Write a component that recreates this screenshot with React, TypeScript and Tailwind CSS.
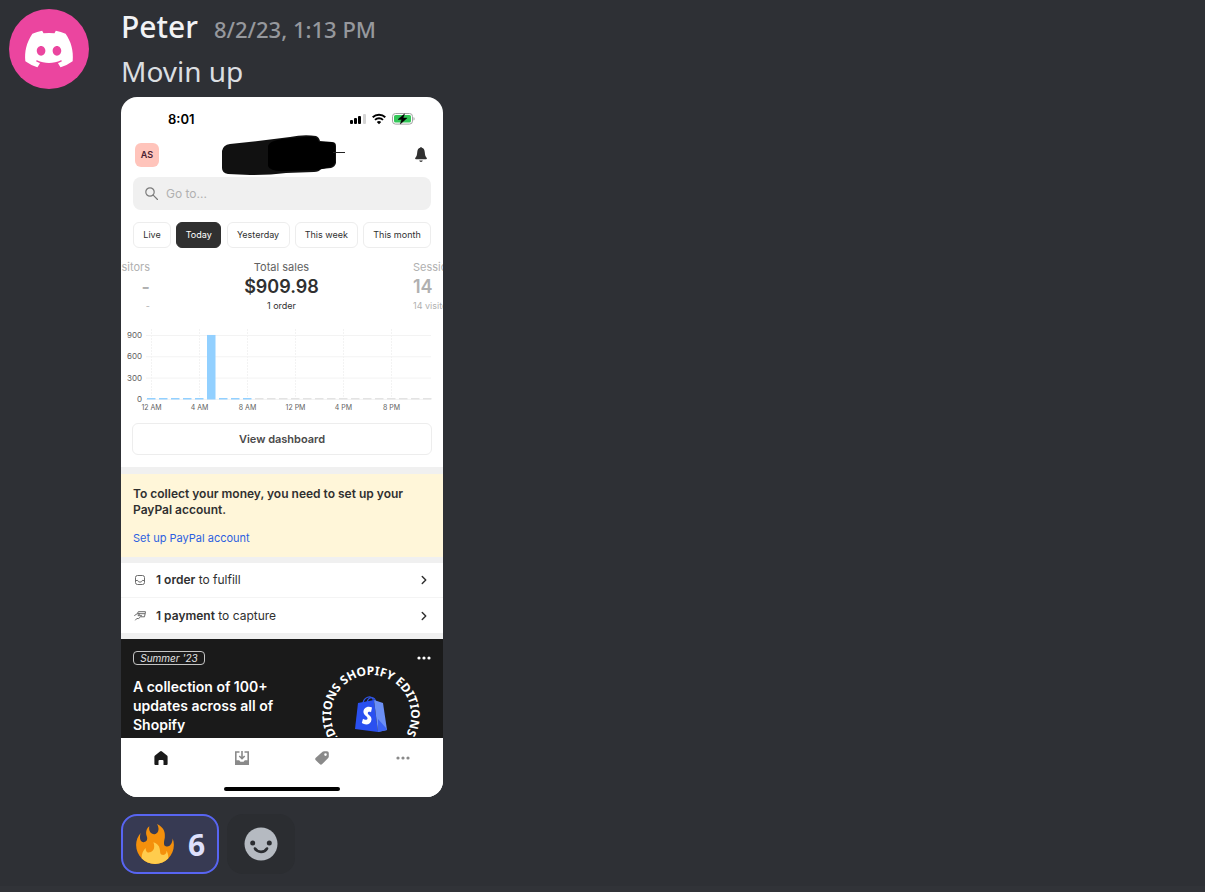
import { FaDiscord } from "react-icons/fa";
import { ChevronRight } from "lucide-react";

const ranges = [
  { label: "Live", width: "w-[38px]" },
  { label: "Today", width: "w-[45px]", active: true },
  { label: "Yesterday", width: "w-[63px]" },
  { label: "This week", width: "w-[63px]" },
  { label: "This month", width: "w-[68px]" },
];

const hourlySales = [0, 0, 0, 0, 0, 910, 0, 0, 0];
const yTicks = [900, 600, 300, 0];
const xTicks = ["12 AM", "4 AM", "8 AM", "12 PM", "4 PM", "8 PM"];

const Avatar = () => (
  <div className="w-20 h-20 shrink-0 rounded-full bg-[#eb459f] text-white flex items-center justify-center">
    <FaDiscord className="w-[52px] h-[52px]" />
  </div>
);

const StatusBar = () => (
  <div className="flex items-center justify-between pl-[47px] pr-7 pt-3">
    <div className="text-[13px] leading-5 font-semibold text-black">8:01</div>
    <div className="flex items-center gap-[6px]">
      <svg className="w-4 h-3" viewBox="0 0 16 12">
        <rect x="0" y="7" width="3" height="4" rx="1" />
        <rect x="4" y="5" width="3" height="6" rx="1" />
        <rect x="8" y="3" width="3" height="8" rx="1" />
        <rect x="13" y="1" width="3" height="10" rx="1" fill="#d4d4d4" />
      </svg>
      <svg className="w-[14px] h-3" viewBox="0 0 14 12">
        <g fill="none" stroke="#000" strokeWidth="1.9">
          <path d="M.7 4.3a9 9 0 0 1 12.6 0" />
          <path d="M3 6.9a5.7 5.7 0 0 1 8 0" />
        </g>
        <path d="M7 11.2 4.8 9a3.1 3.1 0 0 1 4.4 0z" />
      </svg>
      <svg className="w-[23px] h-3" viewBox="0 0 23 12">
        <rect x=".5" y=".5" width="20" height="10.6" rx="3" fill="#fff" stroke="#a3a3a3" />
        <rect x="2" y="2" width="17" height="7.6" rx="1.6" fill="#34c759" />
        <path d="M21.5 4v3.6c1.5-.5 1.5-3 0-3.6z" fill="#a3a3a3" />
        <path d="M12.6.8 6 6.5h3.6L8.3 11l6.8-6h-3.9z" stroke="#000" strokeWidth=".4" />
      </svg>
    </div>
  </div>
);

const StoreHeader = () => (
  <div className="flex items-center justify-between pl-[14px] pr-4 pt-[3px] h-12">
    <div className="w-6 h-6 rounded-md bg-[#ffc4bb] text-[#4a1f33] text-[9px] font-semibold flex items-center justify-center">
      AS
    </div>
    <svg className="w-[126px] h-[42px] -ml-2" viewBox="0 0 126 42">
      <path
        d="M2 17Q3 11 10 10L38 7 70 3Q84 0 96 2 99 3 100 7L112 8Q116 8 116 12V29Q115 33 111 34L101 35Q99 38 94 38L66 39Q50 41 30 41L8 40Q2 39 2 34Z"
        fill="#111"
      />
      <path
        d="M48 12Q49 7 62 5L84 3Q96 1 98 6L99 8 111 8Q115 9 115 12V28Q114 32 110 33L98 36 66 37Q50 38 48 32Z"
        fill="#000"
      />
      <path d="M113 18.5h12" stroke="#222" />
    </svg>
    <button aria-label="Notifications">
      <svg className="w-3 h-4" viewBox="0 0 12 16" fill="#303030">
        <path d="M5.2.8c0-1 1.6-1 1.6 0C8.8 1.2 9.6 3 9.8 5.5c.2 2.800.7 4 1.800 5.300.6.8.3 1.500-.6 1.500H1c-.9 0-1.200-.7-.6-1.500C1.500 9.500 2 8.300 2.200 5.500 2.400 3 3.200 1.200 5.200.8z" />
        <path d="M4.200 13.600h3.600c-.3 1.800-3.300 1.800-3.600 0z" />
      </svg>
    </button>
  </div>
);

const SearchBox = () => (
  <label className="mx-3 h-[33px] rounded-lg bg-[#f0f0f0] flex items-center gap-2 px-3">
    <svg className="w-[13px] h-[13px] shrink-0" viewBox="0 0 13 13" fill="none" stroke="#7a7a7a" strokeWidth="1.200">
      <circle cx="5" cy="5" r="4.200" />
      <path d="m8.200 8.200 4.300 4.300" strokeLinecap="round" />
    </svg>
    <input
      type="text"
      aria-label="Search"
      placeholder="Go to..."
      className="w-full bg-transparent text-[12px] placeholder:text-[#b0b0b0] outline-none"
    />
  </label>
);

const Metrics = () => (
  <div className="flex justify-between mt-[11px] text-[11px]">
    <div className="w-[29px] flex flex-col items-end text-[#b0b0b0]">
      <div className="leading-4">Visitors</div>
      <div className="text-lg leading-6 font-semibold">-</div>
      <div className="text-[9px] leading-[14px]">-</div>
    </div>
    <div className="flex flex-col items-center text-[#303030]">
      <div className="leading-4 text-[#616161]">Total sales</div>
      <div className="text-lg leading-6 font-semibold">$909.98</div>
      <div className="text-[9px] leading-[14px]">1 order</div>
    </div>
    <div className="w-[30px] whitespace-nowrap text-[#b0b0b0]">
      <div className="leading-4">Sessions</div>
      <div className="text-lg leading-6 font-semibold">14</div>
      <div className="text-[9px] leading-[14px]">14 visitors</div>
    </div>
  </div>
);

const SalesChart = () => (
  <svg className="w-full mt-[10px]" viewBox="0 0 322 90" role="img" aria-label="Sales by hour">
    {yTicks.map((tick, i) => (
      <g key={tick}>
        <path d={`M25 ${12.5 + i * 21.3}H310`} stroke="#f3f3f3" />
        <text x="21" y={15 + i * 21.3} fontSize="8" textAnchor="end" fill="#616161">
          {tick}
        </text>
      </g>
    ))}
    {xTicks.map((tick, i) => (
      <g key={tick}>
        <path d={`M${30.5 + i * 48} 6V76`} stroke="#f3f3f3" strokeDasharray="2 1" />
        <text x={30.5 + i * 48} y="87" fontSize="7" textAnchor="middle" fill="#616161">
          {tick}
        </text>
      </g>
    ))}
    {Array.from({ length: 24 }, (_, hour) => {
      const height = Math.max((hourlySales[hour] ?? 0) / 14.1, 1.5);
      return (
        <rect
          key={hour}
          x={26 + hour * 12}
          y={76.5 - height}
          width="8.500"
          height={height}
          fill={hour < hourlySales.length ? "#92d0ff" : "#e3e3e3"}
        />
      );
    })}
  </svg>
);

const InboxIcon = () => (
  <svg className="w-3 h-3" viewBox="0 0 12 12" fill="none" stroke="#6b6b6b">
    <rect x="1.500" y="1.500" width="9" height="9" rx="2" />
    <path d="M1.500 6.500h2.200c.4 0 .6 1.500 1.300 1.500h2c.7 0 .9-1.500 1.300-1.500h2.200" />
  </svg>
);

const PaymentIcon = () => (
  <svg className="w-3 h-3" viewBox="0 0 12 12" fill="none" stroke="#6b6b6b" strokeLinejoin="round">
    <path d="M3.500 3.500 4.300 1.700h7.200L10.500 6.800H7M3.900 3.700h7.300" />
    <path d="M.3 5.700 3 3.800h2.700L4 5.700h3.700L4.700 8.500H2.800L1.300 10.300" />
  </svg>
);

interface TaskRowProps {
  icon: React.ReactNode;
  count: string;
  action: string;
}

const TaskRow = ({ icon, count, action }: TaskRowProps) => (
  <button className="w-full h-[35px] flex items-center pl-[13px] pr-3 text-[12px] text-[#303030]">
    {icon}
    <span className="ml-[10px]">
      <span className="font-semibold">{count}</span> {action}
    </span>
    <ChevronRight className="ml-auto w-[14px] h-[14px] text-[#303030]" strokeWidth={2.5} />
  </button>
);

const EditionsBadge = () => (
  <svg className="w-[100px] h-[77px]" viewBox="0 0 100 77" aria-label="Shopify Editions">
    <path id="ring" d="M50 95a40 40 0 0 1 0-80a40 40 0 0 1 0 80" fill="none" />
    <text className="font-['Noto_Sans']" fontSize="12" fontWeight="700" fill="#fff">
      <textPath href="#ring" startOffset="14%">
        EDITIONS SHOPIFY EDITIONS
      </textPath>
    </text>
    <g fill="none" stroke="#2f55e8" strokeWidth="1.200">
      <path d="M42 43c1-6 8-8 10-4l1 4" />
      <path d="M46 42c2-6 8-6 9 1" />
    </g>
    <path d="M37 43 53 40 57 72 34 69Z" fill="#2a50f0" />
    <path d="M53 40 62 43 66 70 57 72Z" fill="#6b8ff5" />
    <path d="m57 59 8 9 1 2-9 2z" fill="#3c63f2" />
    <path
      d="M51 47.500c-5-2-9 1-8.500 5 .5 3 4.500 4 4 6.300-.5 1.800-3 1-4.500 0l-1.200 4.200c4 2.800 9.300 1.500 9.700-3.500.3-4-4-4.500-3.700-6.500.3-1.500 2.200-1.200 3.200-.8z"
      fill="#fff"
    />
  </svg>
);

const Dots = () => (
  <svg className="w-[14px] h-1" viewBox="0 0 14 4" fill="currentColor">
    <circle cx="2" cy="2" r="1.600" />
    <circle cx="7" cy="2" r="1.600" />
    <circle cx="12" cy="2" r="1.600" />
  </svg>
);

const EditionsCard = () => (
  <div className="h-[99px] overflow-hidden bg-[#1a1a1a] text-white flex justify-between px-3">
    <div className="pt-3">
      <div className="w-[72px] h-[14px] rounded border border-[#c4c4c4] text-[10px] leading-3 italic text-center text-[#e3e3e3]">
        Summer '23
      </div>
      <div className="mt-3 w-[152px] text-[14px] leading-[19px] font-semibold">
        A collection of 100+ updates across all of Shopify
      </div>
    </div>
    <div className="flex flex-col items-end pt-[17px]">
      <button aria-label="More about editions" className="h-1 flex">
        <Dots />
      </button>
      <div className="mr-[10px]">
        <EditionsBadge />
      </div>
    </div>
  </div>
);

const TabBar = () => (
  <div className="bg-white">
    <nav className="h-10 grid grid-cols-4 items-center justify-items-center text-[#8a8a8a]">
      <button aria-label="Home">
        <svg className="w-[14px] h-[14px]" viewBox="0 0 14 14" fill="#1a1a1a">
          <path d="M6 .4q1-.7 2 0l5 4q.6.5.6 1.300V13q0 1-1 1H9.500V10Q9.500 9 8.500 9h-3Q4.500 9 4.500 10v4H1.400q-1 0-1-1V5.700q0-.8.6-1.300z" />
        </svg>
      </button>
      <button aria-label="Orders">
        <svg className="w-[14px] h-[14px]" viewBox="0 0 14 14" fill="none" stroke="currentColor" strokeWidth="1.600">
          <path d="M4.500 1H.8v12.200h12.400V1H9.500M7 0v7.500M4.300 5 7 7.700 9.700 5" />
          <path d="M.8 10h3l1.200 1.500h4l1.200-1.500h3v3.200H.8z" fill="currentColor" />
        </svg>
      </button>
      <button aria-label="Products">
        <svg className="w-[14px] h-[14px]" viewBox="0 0 14 14" fill="currentColor">
          <path
            fillRule="evenodd"
            d="M7.500.8Q8.200.2 9 .2h3q1.800 0 1.800 1.800v3.500q0 .8-.6 1.400l-6 6.200q-1.200 1.200-2.500 0L.8 9.200q-1.200-1.300 0-2.500zM10.500 2.300a1.300 1.300 0 1 0 0 2.600 1.300 1.300 0 0 0 0-2.600z"
          />
        </svg>
      </button>
      <button aria-label="More">
        <Dots />
      </button>
    </nav>
    <div className="h-[19px] flex justify-center pt-[9px]">
      <div className="w-[116px] h-1 rounded-full bg-black" />
    </div>
  </div>
);

const Screenshot = () => (
  <div className="mt-1 w-[322px] max-w-full rounded-2xl overflow-hidden bg-white font-['Inter',sans-serif]">
    <StatusBar />
    <StoreHeader />
    <SearchBox />
    <div className="flex justify-between mx-3 mt-3">
      {ranges.map((range) => (
        <button
          key={range.label}
          className={`h-[26px] rounded-md border text-[9px] ${range.width} ${
            range.active
              ? "bg-[#303030] border-[#303030] text-white"
              : "border-[#ededed] text-[#303030]"
          }`}
        >
          {range.label}
        </button>
      ))}
    </div>
    <Metrics />
    <SalesChart />
    <div className="px-[11px] pt-[10px] pb-3">
      <button className="w-full h-8 rounded-md border border-[#ededed] text-[11px] font-semibold text-[#4a4a4a]">
        View dashboard
      </button>
    </div>
    <div className="border-t-[7px] border-b-[6px] border-[#f0f0f0] bg-[#fff6d9] px-3 pt-3 pb-[11px]">
      <div className="text-[12px] leading-4 font-semibold text-[#303030]">
        To collect your money, you need to set up your PayPal account.
      </div>
      <a href="#paypal" className="block mt-3 text-[11px] leading-4 text-[#2c5fe0]">
        Set up PayPal account
      </a>
    </div>
    <div className="border-b-[6px] border-[#f0f0f0] divide-y divide-[#f4f4f4]">
      <TaskRow icon={<InboxIcon />} count="1 order" action="to fulfill" />
      <TaskRow icon={<PaymentIcon />} count="1 payment" action="to capture" />
    </div>
    <EditionsCard />
    <TabBar />
  </div>
);

const Reactions = () => (
  <div className="flex gap-2 mt-[17px]">
    <button className="h-[60px] px-3 rounded-2xl border-2 border-[#5865f2] bg-[#373a53] flex items-center gap-[13px]">
      <svg className="w-10 h-10" viewBox="0 0 36 36">
        <path
          fill="#F4900C"
          d="M35 19c0-2.062-.367-4.039-1.04-5.868-.46 5.389-3.333 8.157-6.335 6.868-2.812-1.208-.917-5.917-.777-8.164.236-3.809-.012-8.169-6.931-11.794 2.875 5.5.333 8.917-2.333 9.125-2.958.231-5.667-2.542-4.667-7.042-3.238 2.386-3.332 6.402-2.333 9 1.042 2.708-.042 4.958-2.583 5.208-2.84.28-4.418-3.041-2.963-8.333C2.52 10.965 1 14.805 1 19c0 9.389 7.611 17 17 17s17-7.611 17-17z"
        />
        <path
          fill="#FFCC4D"
          d="M28.394 23.999c.148 3.084-2.561 4.293-4.019 3.709-2.106-.843-1.541-2.291-2.083-5.291s-2.625-5.083-5.708-6c2.25 6.333-1.247 8.667-3.08 9.084-1.872.426-3.753-.001-3.968-4.007C7.352 23.668 6 26.676 6 30c0 .368.023.73.055 1.09C9.125 34.124 13.342 36 18 36s8.875-1.876 11.945-4.91c.032-.36.055-.722.055-1.09 0-2.187-.584-4.236-1.606-6.001z"
        />
      </svg>
      <span className="text-[30px] font-bold text-[#dee0fc]">6</span>
    </button>
    <button
      aria-label="Add reaction"
      className="w-[68px] h-[60px] rounded-2xl bg-[#2b2d31] flex items-center justify-center"
    >
      <svg className="w-[34px] h-[34px]" viewBox="0 0 34 34">
        <circle cx="17" cy="17" r="16.500" fill="#b5bac1" />
        <g fill="#2b2d31">
          <circle cx="8.700" cy="16" r="2.500" />
          <circle cx="25.300" cy="16" r="2.500" />
        </g>
        <path d="M11 21.500c2.500 4.500 9.500 4.500 12 0" fill="none" stroke="#2b2d31" strokeWidth="2.600" strokeLinecap="round" />
      </svg>
    </button>
  </div>
);

const App = () => {
  return (
    <div className="min-h-screen bg-[#313338] font-['Noto_Sans',sans-serif]">
      <div className="flex gap-8 pl-[9px] pt-[9px] pb-3 bg-[#2e3035]">
        <Avatar />
        <div className="min-w-0 -mt-1">
          <div className="h-11 flex items-baseline gap-4 leading-[44px]">
            <span className="text-[30px] font-medium text-[#f2f3f5]">Peter</span>
            <span className="text-[22px] font-medium text-[#96989d]">8/2/23, 1:13 PM</span>
          </div>
          <div className="text-[28px] leading-[44px] text-[#dbdee1]">Movin up</div>
          <Screenshot />
          <Reactions />
        </div>
      </div>
    </div>
  );
};

export default App;
